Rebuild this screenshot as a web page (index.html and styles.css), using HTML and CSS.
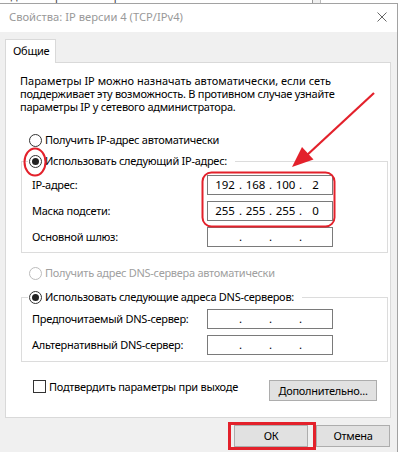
FILE: index.html
```html
<!DOCTYPE html>
<html lang="ru">
<head>
<meta charset="utf-8">
<title>Свойства: IP версии 4 (TCP/IPv4)</title>
<link rel="stylesheet" href="styles.css">
</head>
<body>
<div class="behind">
  <span class="behind-text">административные права.</span>
  <span class="behind-box"></span>
</div>
<div class="win">
  <div class="titlebar">
    <span class="title">Свойства: IP версии 4 (TCP/IPv4)</span>
    <svg class="close" width="10" height="10" viewBox="0 0 10 10"><path d="M0.5 0.5 L9.5 9.5 M9.5 0.5 L0.5 9.5" stroke="#666" stroke-width="1" fill="none"/></svg>
  </div>
  <div class="client">
    <div class="tabs"><div class="tab">Общие</div></div>
    <div class="panel">
      <div class="intro">
        <div class="ln wide">Параметры IP можно назначать автоматически, если сеть</div>
        <div class="ln">поддерживает эту возможность. В противном случае узнайте</div>
        <div class="ln">параметры IP у сетевого администратора.</div>
      </div>

      <div class="radio-row first"><span class="radio"></span>Получить IP-адрес автоматически</div>

      <fieldset class="group g1">
        <legend><span class="radio checked"></span>Использовать следующий IP-адрес:</legend>
        <div class="field"><span class="lbl">IP-адрес:</span>
          <div class="ip"><span>192</span><i>.</i><span>168</span><i>.</i><span>100</span><i>.</i><span>2</span></div></div>
        <div class="field"><span class="lbl">Маска подсети:</span>
          <div class="ip"><span>255</span><i>.</i><span>255</span><i>.</i><span>255</span><i>.</i><span>0</span></div></div>
        <div class="field"><span class="lbl">Основной шлюз:</span>
          <div class="ip"><span></span><i>.</i><span></span><i>.</i><span></span><i>.</i><span></span></div></div>
      </fieldset>

      <div class="radio-row disabled"><span class="radio"></span>Получить адрес DNS-сервера автоматически</div>

      <fieldset class="group g2">
        <legend><span class="radio checked"></span>Использовать следующие адреса DNS-серверов:</legend>
        <div class="field"><span class="lbl">Предпочитаемый DNS-сервер:</span>
          <div class="ip"><span></span><i>.</i><span></span><i>.</i><span></span><i>.</i><span></span></div></div>
        <div class="field"><span class="lbl">Альтернативный DNS-сервер:</span>
          <div class="ip"><span></span><i>.</i><span></span><i>.</i><span></span><i>.</i><span></span></div></div>
      </fieldset>

      <div class="check-row">
        <div class="check"><span class="box"></span>Подтвердить параметры при выходе</div>
        <button class="btn adv">Дополнительно...</button>
      </div>
    </div>
    <div class="actions">
      <button class="btn act">ОК</button>
      <button class="btn act">Отмена</button>
    </div>
  </div>
</div>
<svg class="annot" width="400" height="452" viewBox="0 0 400 452">
  <ellipse cx="35" cy="162" rx="10.5" ry="13.5" fill="none" stroke="#e3212b" stroke-width="2"/>
  <rect x="202.5" y="172.5" width="132" height="54" rx="9" fill="none" stroke="#e3212b" stroke-width="2"/>
  <line x1="374" y1="93" x2="306" y2="156" stroke="#e3212b" stroke-width="2.2"/>
  <polygon points="292,167 313.5,159.5 302,147" fill="#e3212b"/>
  <rect x="229.5" y="423.5" width="85" height="25" fill="none" stroke="#e3212b" stroke-width="3"/>
</svg>
</body>
</html>
```
FILE: styles.css
```css
* { box-sizing: border-box; }
html, body { margin: 0; padding: 0; }
body {
  width: 400px;
  height: 452px;
  overflow: hidden;
  position: relative;
  background: #fff;
  font-family: "Noto Sans", "Segoe UI", sans-serif;
  font-size: 11px;
  letter-spacing: -0.27px;
  color: #000;
}

.behind {
  height: 3px;
  overflow: hidden;
  display: flex;
}
.behind-text {
  width: 312px;
  padding-left: 5px;
  margin-top: -11px;
  line-height: 14px;
  color: #444;
  white-space: nowrap;
}
.behind-box {
  width: 9px;
  border-left: 1px solid #999;
  border-right: 1px solid #bbb;
  background: #f0f0f0;
}

.win {
  width: 398px;
  height: 449px;
  border-top: 1px solid #a2a2a2;
  border-right: 1px solid #a2a2a2;
  display: flex;
  flex-direction: column;
}

.titlebar {
  height: 28px;
  background: #fff;
  display: flex;
  align-items: center;
  padding: 0 10px 2px 9px;
}
.title {
  flex: 1;
  color: #999;
  font-size: 11.2px;
  letter-spacing: 0;
  line-height: 16px;
}
.close { display: block; }

.client {
  flex: 1;
  background: #f0f0f0;
  padding: 7px 6px 0 5px;
}

.tabs { display: flex; }
.tab {
  position: relative;
  z-index: 1;
  width: 51px;
  height: 24px;
  margin-bottom: -1px;
  padding: 3px 7px 0 7px;
  line-height: 16px;
  background: #fff;
  border: 1px solid #d9d9d9;
  border-bottom: none;
}

.panel {
  height: 356px;
  background: #fff;
  border: 1px solid #d9d9d9;
  display: flex;
  flex-direction: column;
}

.intro {
  margin: 11px 0 0 14px;
  white-space: nowrap;
}
.ln {
  height: 13px;
  line-height: 13px;
}
.ln.wide { letter-spacing: 0; }

.radio-row {
  display: flex;
  align-items: center;
  height: 16px;
  line-height: 16px;
  margin-left: 23px;
}
.radio-row.first { margin-top: 19px; }
.radio-row.disabled { margin-top: 12px; color: #a0a0a0; }
.radio-row.disabled .radio { border-color: #bcbcbc; }

.radio {
  flex: none;
  width: 13px;
  height: 13px;
  margin-right: 3px;
  border: 1px solid #333;
  border-radius: 50%;
  background: #fff;
  display: flex;
  align-items: center;
  justify-content: center;
}
.radio.checked::after {
  content: "";
  width: 7px;
  height: 7px;
  border-radius: 50%;
  background: #222;
}

.group {
  margin: 0 2px 0 15px;
  padding: 0;
  min-width: 0;
  border: 1px solid #dcdcdc;
}
.group legend {
  display: flex;
  align-items: center;
  height: 16px;
  line-height: 16px;
  margin-left: 6px;
  padding: 0 8px 0 1px;
  white-space: nowrap;
}
.g1 { margin-top: 5px; padding-bottom: 5px; }
.g2 { margin-top: 8px; padding-bottom: 6px; }
.g1 .field:first-of-type { margin-top: 6px; }
.g2 .field:first-of-type { margin-top: 4px; }

.field {
  display: flex;
  align-items: center;
  height: 20px;
  padding-left: 10px;
}
.field + .field { margin-top: 6px; }
.lbl {
  width: 175px;
  flex: none;
  line-height: 16px;
  white-space: nowrap;
}

.ip {
  width: 126px;
  height: 20px;
  border: 1px solid #7a7a7a;
  background: #fff;
  padding-left: 3px;
  display: grid;
  grid-template-columns: 28px 3px 27px 3px 27px 3px 27px;
  align-items: center;
  line-height: 16px;
  font-size: 11.5px;
  letter-spacing: 0;
}
.ip span { text-align: center; }
.ip i {
  font-style: normal;
  display: flex;
  justify-content: center;
}

.check-row {
  margin-top: 18px;
  display: flex;
  align-items: flex-start;
}
.check {
  display: flex;
  align-items: center;
  height: 13px;
  line-height: 13px;
  margin-left: 27px;
}
.check .box {
  flex: none;
  width: 13px;
  height: 13px;
  margin-right: 3px;
  border: 1px solid #333;
  background: #fff;
}

.btn {
  font: inherit;
  letter-spacing: inherit;
  color: #000;
  background: #e1e1e1;
  border: 1px solid #adadad;
  padding: 0;
  line-height: 16px;
  border-radius: 0;
}
.adv {
  margin-left: auto;
  margin-right: 13px;
  width: 108px;
  height: 21px;
}

.actions {
  margin-top: 7px;
  margin-right: 1px;
  display: flex;
  justify-content: flex-end;
  gap: 8px;
}
.act {
  width: 74px;
  height: 22px;
}

.annot {
  position: absolute;
  left: 0;
  top: 0;
  pointer-events: none;
}
```
